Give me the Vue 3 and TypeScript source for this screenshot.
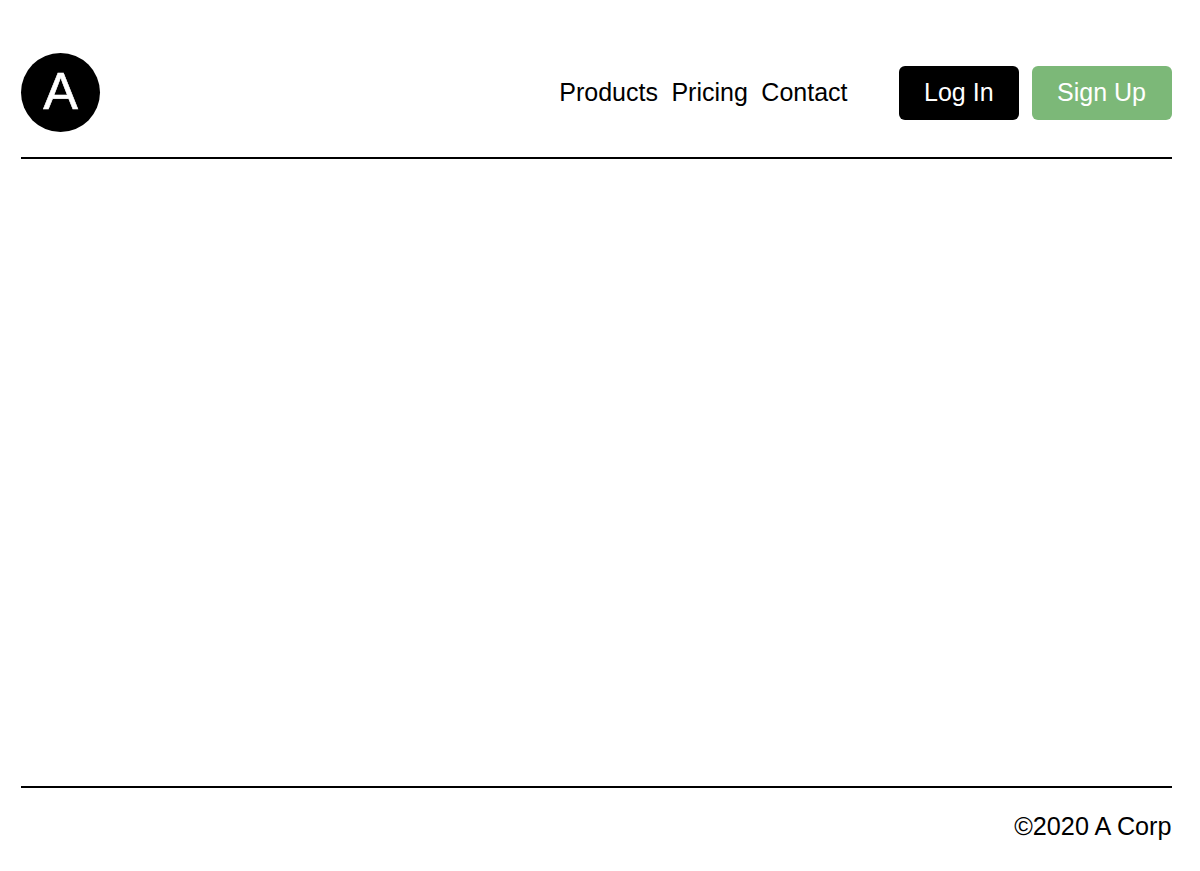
<template>
  <div class="page">
    <header class="header">
      <div class="logo">A</div>
      <nav class="nav">
        <a class="navLink">Products</a>
        <a class="navLink">Pricing</a>
        <a class="navLink">Contact</a>
      </nav>
      <div class="actions">
        <button class="btn login">Log In</button>
        <button class="btn signup">Sign Up</button>
      </div>
    </header>
    <main class="content" />
    <footer class="footer">©2020 A Corp</footer>
  </div>
</template>

<script setup lang="ts">
</script>

<style>
html,
body {
  margin: 0;
  background: #fff;
}
</style>

<style scoped>
.page {
  height: 871px;
  box-sizing: border-box;
  padding: 0 28.5px 0 21px;
  display: flex;
  flex-direction: column;
  font-family: "Liberation Sans", Arial, sans-serif;
  color: #000;
}

.header {
  display: flex;
  align-items: center;
  padding: 53px 0 25px;
  border-bottom: 2px solid #000;
}

.logo {
  width: 79px;
  height: 79px;
  box-sizing: border-box;
  padding-bottom: 3px;
  border-radius: 50%;
  background: #000;
  color: #fff;
  font-size: 52px;
  -webkit-text-stroke: 0.6px #fff;
  display: flex;
  align-items: center;
  justify-content: center;
}

.nav {
  margin-left: auto;
  display: flex;
  gap: 13.5px;
  font-size: 25px;
}

.actions {
  display: flex;
  gap: 12.5px;
  margin-left: 51px;
}

.btn {
  height: 54px;
  border: none;
  border-radius: 6px;
  color: #fff;
  font: inherit;
  font-size: 25px;
  padding: 0 25.5px;
}

.login {
  background: #000;
}

.signup {
  background: #7cb878;
}

.content {
  flex: 1;
}

.footer {
  border-top: 2px solid #000;
  padding: 24px 0 30px;
  text-align: right;
  font-size: 25.2px;
}
</style>
